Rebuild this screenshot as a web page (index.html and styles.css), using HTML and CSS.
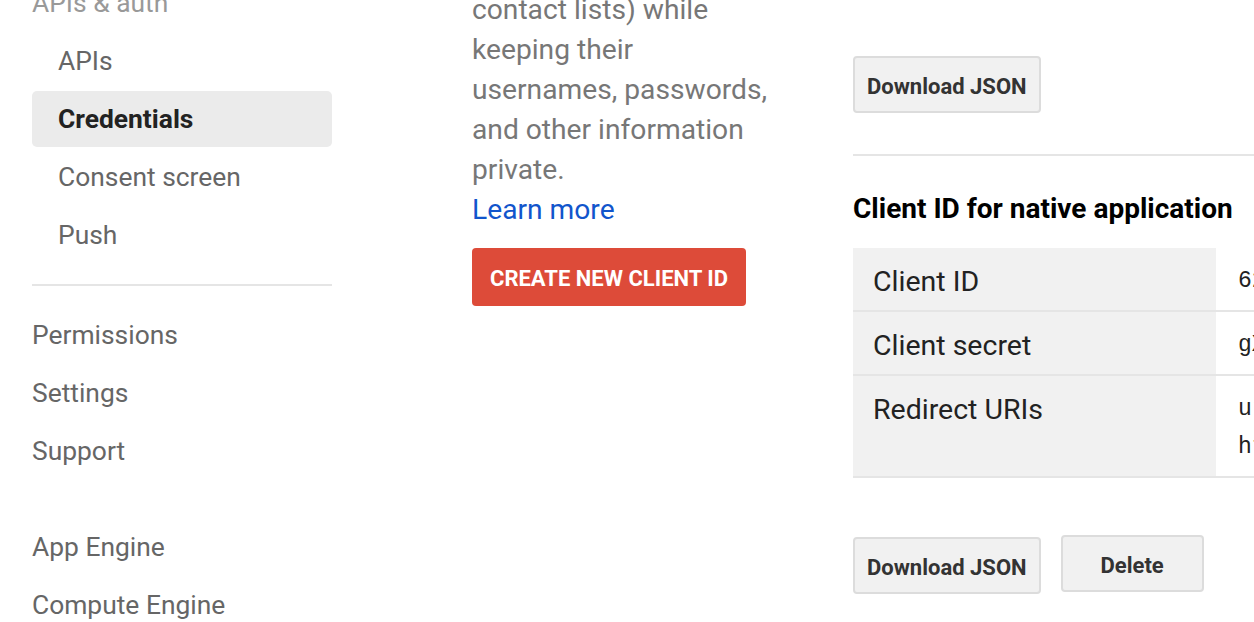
FILE: index.html
```html
<!DOCTYPE html>
<html lang="en">
<head>
<meta charset="utf-8">
<title>Credentials</title>
<link rel="stylesheet" href="styles.css">
</head>
<body>
<div class="page">
  <nav class="sidenav">
    <div class="nav-item nav-group">APIs &amp; auth</div>
    <div class="nav-item sub">APIs</div>
    <div class="nav-item sub active">Credentials</div>
    <div class="nav-item sub">Consent screen</div>
    <div class="nav-item sub">Push</div>
    <div class="nav-divider"></div>
    <div class="nav-item">Permissions</div>
    <div class="nav-item">Settings</div>
    <div class="nav-item">Support</div>
    <div class="nav-space"></div>
    <div class="nav-item">App Engine</div>
    <div class="nav-item">Compute Engine</div>
  </nav>

  <section class="intro">
    <p class="intro-text">contact lists) while<br>keeping their<br>usernames, passwords,<br>and other information<br>private.</p>
    <a class="learn" href="#">Learn more</a>
    <div class="intro-actions">
      <button class="btn-red">CREATE NEW CLIENT ID</button>
    </div>
  </section>

  <section class="clients">
    <div class="btn-row top-row">
      <button class="btn-gray">Download JSON</button>
    </div>
    <div class="hr"></div>
    <h2 class="client-title">Client ID for native application</h2>
    <div class="kv">
      <div class="kv-row">
        <div class="kv-key">Client ID</div>
        <div class="kv-val"><code>628431957021-9kq3bd5ivm2o8lt1hq4ce0r7snfgau6p.apps.googleusercontent.com</code></div>
      </div>
      <div class="kv-row">
        <div class="kv-key">Client secret</div>
        <div class="kv-val"><code>gX4rT8mQ2vN7kLp1sZ9wYc3D</code></div>
      </div>
      <div class="kv-row">
        <div class="kv-key">Redirect URIs</div>
        <div class="kv-val"><code>urn:ietf:wg:oauth:2.0:oob</code><code>http://localhost</code></div>
      </div>
    </div>
    <div class="btn-row bottom-row">
      <button class="btn-gray">Download JSON</button>
      <button class="btn-gray btn-delete">Delete</button>
    </div>
  </section>
</div>
</body>
</html>
```

FILE: styles.css
```css
html, body {
  margin: 0;
  padding: 0;
  background: #ffffff;
  overflow: hidden;
}

body {
  font-family: Roboto, "Noto Sans", Arial, sans-serif;
  width: 1254px;
  height: 622px;
}

.page {
  display: flex;
  align-items: flex-start;
}

/* ---------- side navigation ---------- */
.sidenav {
  width: 300px;
  margin-left: 32px;
  margin-top: -25px;
  flex: none;
}

.nav-item {
  height: 56px;
  line-height: 56px;
  margin-bottom: 2px;
  font-size: 26.4px;
  color: #666666;
  white-space: nowrap;
}

.nav-group {
  color: #999999;
}

.nav-item.sub {
  padding-left: 26px;
  border-radius: 5px;
}

.nav-item.active {
  background: #ebebeb;
  color: #222222;
  font-weight: 700;
}

.nav-divider {
  height: 2px;
  background: #e5e5e5;
  margin: 21px 0 21px;
}

.nav-space {
  height: 38px;
}

/* ---------- intro column ---------- */
.intro {
  width: 300px;
  margin-left: 140px;
  margin-top: -10px;
  flex: none;
}

.intro-text {
  margin: 0;
  font-size: 28.2px;
  line-height: 40px;
  color: #777777;
  white-space: nowrap;
}

.learn {
  display: block;
  font-size: 28.2px;
  line-height: 40px;
  color: #1155cc;
  text-decoration: none;
}

.intro-actions {
  margin-top: 18px;
}

.btn-red {
  font-family: Roboto, Arial, sans-serif;
  font-size: 22px;
  font-weight: 700;
  color: #ffffff;
  background: #dd4b39;
  border: none;
  border-radius: 4px;
  height: 58px;
  padding: 2px 18px 0;
  cursor: pointer;
}

/* ---------- clients column ---------- */
.clients {
  flex: 1;
  min-width: 0;
  margin-left: 81px;
  padding-top: 56px;
}

.btn-row {
  display: flex;
  align-items: flex-start;
  gap: 20px;
}

.btn-gray {
  font-family: Roboto, Arial, sans-serif;
  font-size: 22px;
  font-weight: 700;
  color: #333333;
  background: #f1f1f1;
  border: 2px solid #dcdcdc;
  border-radius: 4px;
  height: 57px;
  padding: 4px 12px 0;
  cursor: pointer;
}

.btn-delete {
  width: 143px;
  margin-top: -2px;
  padding-top: 3px;
}

.hr {
  height: 2px;
  background: #e5e5e5;
  margin-top: 41px;
}

.client-title {
  margin: 33px 0 19px;
  font-size: 28px;
  line-height: 40px;
  font-weight: 700;
  color: #000000;
  white-space: nowrap;
}

.kv-row {
  display: flex;
  border-bottom: 2px solid #e5e5e5;
}

.kv-key {
  width: 363px;
  flex: none;
  box-sizing: border-box;
  background: #f1f1f1;
  padding: 15px 0 9px 20px;
  font-size: 28.5px;
  line-height: 38px;
  color: #222222;
}

.kv-val {
  padding: 14px 0 10px 22px;
  display: flex;
  flex-direction: column;
}

.kv-val code {
  font-family: "Liberation Mono", "DejaVu Sans Mono", monospace;
  font-size: 23px;
  line-height: 38px;
  color: #222222;
  white-space: nowrap;
}

.bottom-row {
  margin-top: 59px;
}
```
